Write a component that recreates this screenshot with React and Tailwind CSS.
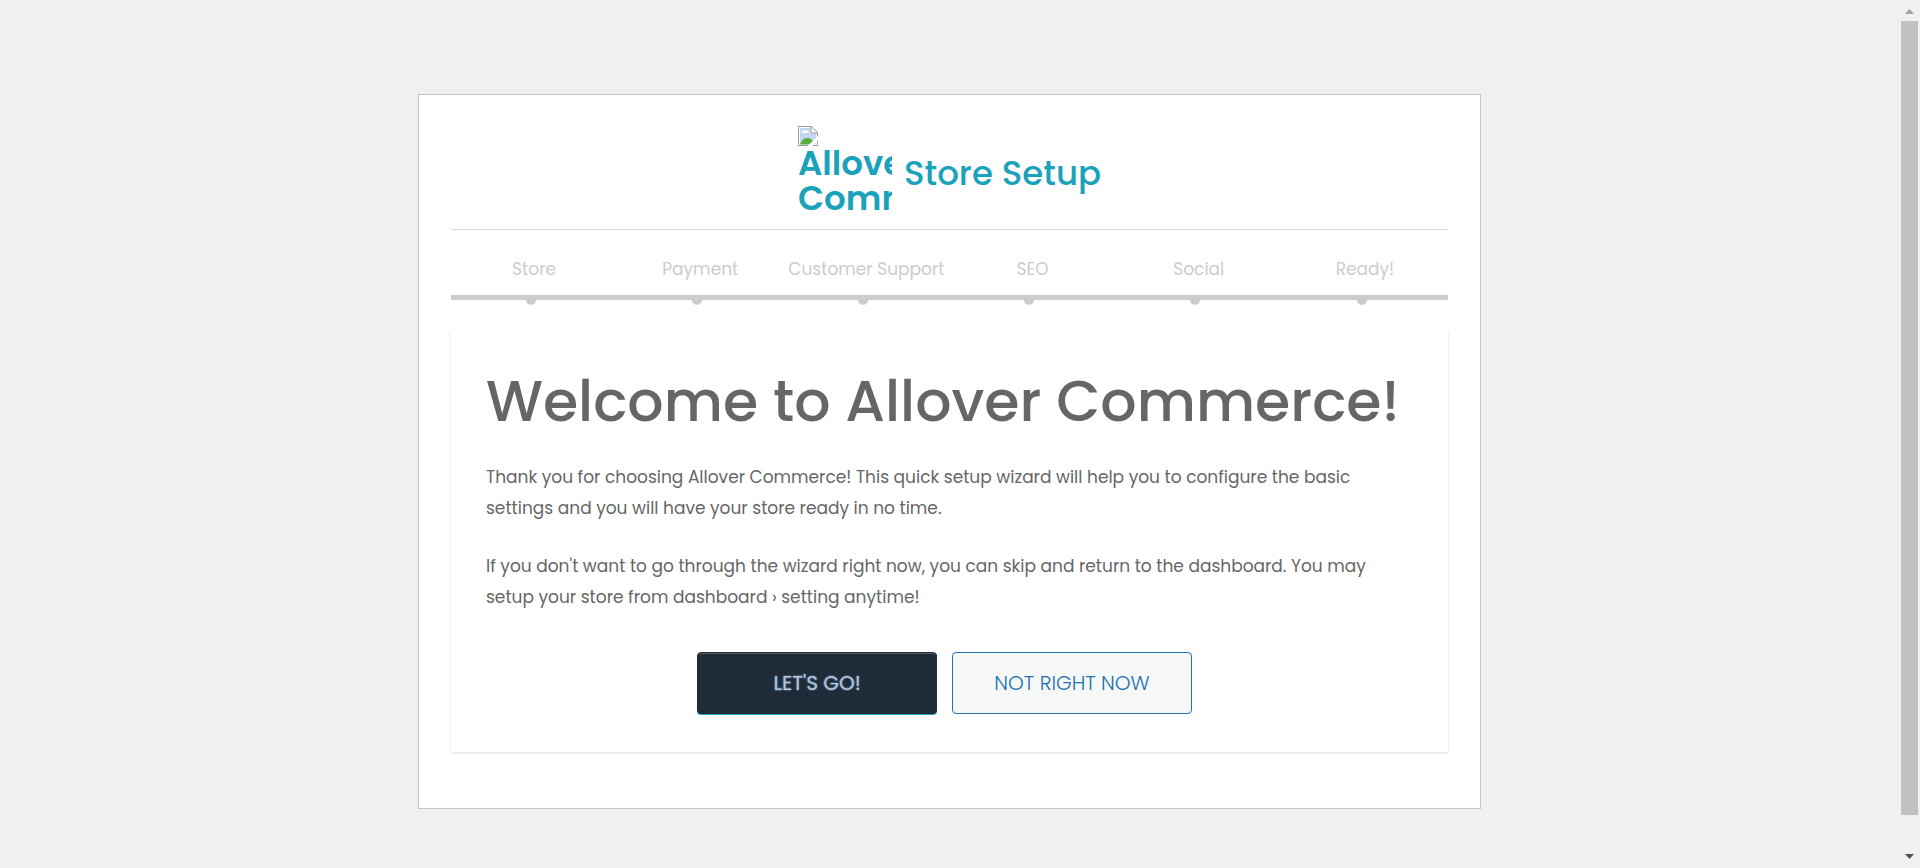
const steps = ["Store", "Payment", "Customer Support", "SEO", "Social", "Ready!"];

function BrokenImageIcon() {
  return (
    <svg className="block size-5" viewBox="0 0 20 20" aria-hidden="true">
      <path d="M.5 .5H13.500L19.500 6.500V19.500H.5Z" fill="#fff" stroke="#999" />
      <path d="M2 2H12.500V7.500H18V18H2Z" fill="#c5d5f4" />
      <path d="M3.500 7c0-1.500 1-2 2-2 .5-1.500 3-1.500 3.500 0 1 0 2 .7 1.500 2Z" fill="#fff" />
      <path d="M2 18.500C3.500 14 6.500 12 9.500 12S15 13.500 16.500 18.500Z" fill="#5aac3c" />
      <path d="M13 1V7H19" fill="#f4f4f4" stroke="#999" />
      <path d="M9.500 20L20 10V14.500L14.500 20Z" fill="#fff" />
    </svg>
  );
}

function Scrollbar() {
  return (
    <div className="flex h-screen w-[21px] shrink-0 flex-col items-center" aria-hidden="true">
      <svg className="h-[21px] w-[17px] shrink-0" viewBox="0 0 17 21">
        <path d="M4 14L8.500 9L13 14Z" fill="#a3a3a3" />
      </svg>
      <div className="w-[17px] flex-1 bg-[#c1c1c1]" />
      <svg className="h-[53px] w-[17px] shrink-0" viewBox="0 0 17 53">
        <path d="M4 39L8.500 44L13 39Z" fill="#505050" />
      </svg>
    </div>
  );
}

export default function App() {
  return (
    <div className="flex min-h-screen bg-[#f0f0f0] font-[Poppins,Inter,sans-serif] text-[#666]">
      <div className="min-w-0 flex-1 pt-[94px]">
        <main className="mx-auto w-full max-w-[1063px] border border-[#c3c4c7] bg-white px-8 pt-[31px] pb-14">
          <h1 className="flex h-[104px] justify-center gap-3 border-b border-[#dadada] text-[34px] font-medium text-[#1aa2ba]">
            <span className="block w-[94px] overflow-hidden font-semibold leading-[35px]">
              <BrokenImageIcon />
              Allover Commerce
            </span>
            <span className="pt-[25px] leading-[44px]">Store Setup</span>
          </h1>
          <ol className="grid grid-cols-6 pt-6 text-center text-[17px] text-[#ccc]">
            {steps.map((step) => (
              <li key={step} className="relative border-b-[5px] border-[#ccc] pt-[3px] pb-[14px] leading-6 whitespace-nowrap">
                {step}
                <span className="absolute -bottom-[10px] left-[45%] size-[10px] rounded-full bg-[#ccc]" />
              </li>
            ))}
          </ol>
          <section className="mt-[30px] px-[35px] pt-[35px] pb-[38px] shadow-[0_1px_3px_rgba(0,0,0,0.13)]">
            <h2 className="text-[57px] leading-[72px] font-medium">
              Welcome to Allover Commerce!
            </h2>
            <p className="mt-[25px] text-[17px] leading-[31px]">
              Thank you for choosing Allover Commerce! This quick setup wizard will help you to configure the basic settings and you will have your store ready in no time.
            </p>
            <p className="mt-[27px] text-[17px] leading-[31px]">
              If you don't want to go through the wizard right now, you can skip and return to the dashboard. You may setup your store from dashboard › setting anytime!
            </p>
            <div className="mt-[39px] mr-[10px] flex justify-center gap-[15px]">
              <button
                type="button"
                className="h-[62px] w-60 rounded border border-[#1f2b36] bg-[#1f2b36] text-xl text-[#c0c4dc] shadow-[inset_0_1px_0_rgba(255,255,255,0.25),0_1px_0_#1aa2ba] [text-shadow:0_-1px_1px_#35586f,1px_0_1px_#35586f,0_1px_1px_#35586f,-1px_0_1px_#35586f]"
              >
                LET'S GO!
              </button>
              <button type="button" className="h-[62px] w-60 rounded border border-[#2271b1] bg-[#f6f7f7] text-xl font-light text-[#2271b1]">
                NOT RIGHT NOW
              </button>
            </div>
          </section>
        </main>
      </div>
      <Scrollbar />
    </div>
  );
}
